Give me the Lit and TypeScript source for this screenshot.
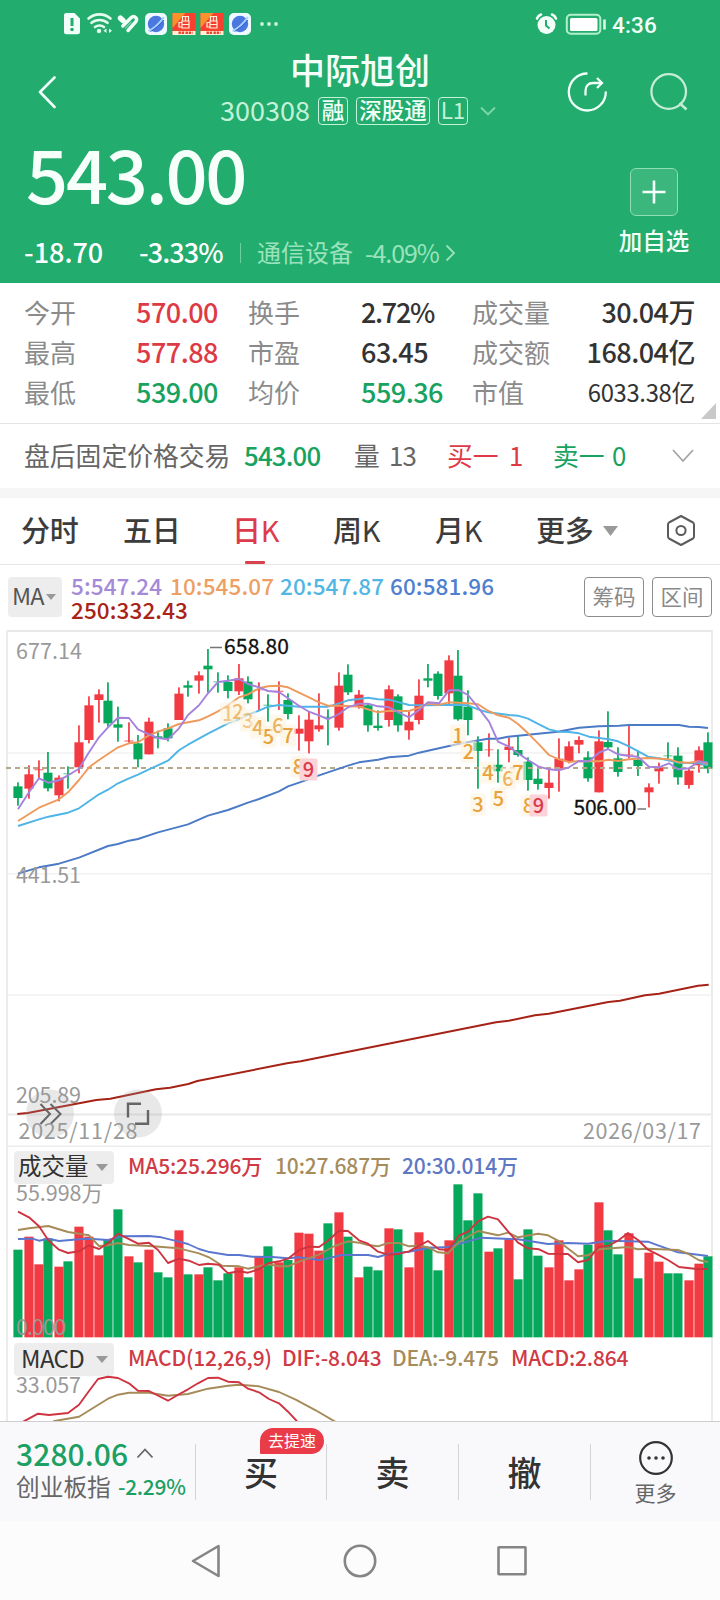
import { LitElement, html, svg, css } from "lit";
import { customElement } from "lit/decorators.js";

const RED = "#f23a43";
const GREEN = "#06a95c";

// [direction, high, body top, body bottom, low], in thirds of a pixel below y = 560
type Candle = [string, number, number, number, number];
const candles: Candle[] = [
  ["G", 667, 679, 714, 737], ["R", 616, 643, 686, 716], ["R", 601, 627, 631, 655], ["G", 576, 638, 685, 694],
  ["R", 646, 653, 706, 724], ["G", 619, 640, 643, 686], ["R", 496, 547, 622, 640], ["R", 409, 436, 540, 550],
  ["R", 388, 403, 420, 488], ["G", 367, 422, 490, 500], ["G", 440, 493, 503, 545], ["R", 487, 541, 545, 548],
  ["G", 525, 550, 598, 622], ["R", 473, 485, 583, 583], ["G", 512, 529, 535, 565], ["G", 490, 505, 535, 544],
  ["R", 382, 401, 480, 480], ["G", 362, 376, 383, 410], ["R", 334, 346, 362, 401], ["G", 267, 317, 328, 398],
  ["G", 337, 364, 367, 398], ["G", 346, 366, 393, 415], ["R", 312, 355, 394, 405], ["G", 349, 365, 418, 430],
  ["R", 367, 388, 391, 452], ["G", 403, 434, 437, 485], ["R", 364, 392, 396, 450], ["G", 400, 420, 462, 478],
  ["R", 466, 506, 521, 572], ["R", 455, 479, 544, 580], ["R", 400, 496, 508, 515], ["G", 448, 470, 473, 556],
  ["R", 337, 377, 503, 512], ["G", 313, 344, 397, 405], ["R", 390, 404, 440, 446], ["G", 430, 436, 496, 515],
  ["G", 451, 497, 504, 512], ["R", 376, 388, 480, 500], ["G", 403, 409, 496, 515], ["R", 455, 485, 511, 539],
  ["R", 358, 407, 480, 493], ["G", 312, 355, 362, 382], ["G", 334, 341, 408, 419], ["R", 286, 301, 400, 437],
  ["G", 270, 347, 478, 482], ["G", 391, 440, 480, 526], ["G", 529, 547, 573, 686], ["R", 520, 568, 571, 590],
  ["G", 568, 614, 634, 668], ["R", 533, 560, 570, 607], ["G", 527, 570, 585, 590], ["G", 592, 605, 660, 692],
  ["G", 626, 656, 672, 689], ["R", 628, 668, 684, 716], ["R", 535, 596, 626, 695], ["R", 544, 559, 604, 610],
  ["R", 529, 540, 554, 580], ["G", 574, 592, 655, 665], ["R", 511, 544, 697, 697], ["G", 454, 546, 562, 566],
  ["G", 562, 595, 636, 650], ["R", 496, 583, 586, 596], ["G", 571, 600, 618, 648], ["R", 670, 682, 697, 742],
  ["R", 608, 622, 634, 671], ["G", 547, 586, 589, 598], ["G", 562, 587, 652, 674], ["R", 626, 632, 675, 686],
  ["R", 559, 571, 616, 638], ["G", 517, 547, 626, 640],
];

// x centre of the k-th trading day; rising days sit one pixel to the right
const dayX = (k: number) => 17.9 + 10 * k + (candles[k][0] === "R" ? 1 : 0);

// bar tops, in thirds of a pixel below y = 1140; the floor is at 592
const volumes = [
  329, 290, 373, 295, 380, 364, 260, 290, 346, 297, 208, 349, 367, 329, 397, 412, 271, 403, 403, 382, 421, 400, 382,
  412, 348, 319, 367, 360, 278, 281, 332, 250, 217, 290, 412, 380, 391, 265, 268, 382, 277, 320, 391, 301, 133, 241,
  160, 335, 325, 298, 418, 268, 347, 382, 301, 421, 388, 314, 187, 271, 343, 280, 415, 338, 365, 400, 400, 421, 371, 349,
];

// A trend line given as two halves: the second one starts at x = 360
const line = (top: number, left: string, right = "") => {
  const half = (src: string, x0: number) =>
    src.split(" ").filter(Boolean).map((p) => {
      const [x, y] = p.split(",").map(Number);
      return `${(x0 + x / 3).toFixed(1)},${(top + y / 3).toFixed(1)}`;
    });
  return [...half(left, 0), ...half(right, 360)].join(" ");
};

const ma5 = line(560,
  "54,748 87,697 117,655 145,668 177,661 204,646 237,626 267,577 297,532 324,502 354,473 387,474 414,508 447,523 474,534 504,538 537,505 564,465 597,436 624,400 654,366 684,362 717,357 744,372 777,382 804,393 837,396 864,415 897,437 927,455 957,466 984,478 1017,462 1044,442 1077,431",
  "24,431 54,439 87,442 117,458 147,472 177,450 204,427 237,430 267,391 297,391 324,405 354,442 387,485 414,545 447,560 474,580 504,600 537,620 567,628 597,631 627,622 657,603 687,604 717,578 744,567 774,583 807,588 834,590 867,620 897,622 927,610 954,628 987,625 1017,604 1044,608");
const ma10 = line(560,
  "54,783 117,743 177,718 204,697 237,660 267,622 297,600 324,582 354,562 387,550 414,547 447,526 474,515 504,505 537,492 597,481 624,469 654,454 684,436 717,412 744,403 777,385 804,379 837,377 864,382 897,398 927,412 957,427 984,437 1017,437 1044,438 1077,440",
  "24,448 54,457 87,452 147,453 177,443 204,431 237,434 267,427 324,430 354,433 384,452 414,466 447,473 474,492 504,520 537,553 567,585 597,598 627,606 657,603 717,604 747,599 774,603 807,598 864,594 927,598 957,607 987,608 1017,604 1044,612");
const ma20 = line(560,
  "54,798 117,778 145,770 204,758 237,745 297,703 324,689 354,670 387,655 414,644 447,628 504,602 537,571 564,554 624,521 684,490 717,478 744,464 777,452 804,440 837,435 897,440 984,440 1017,430 1044,421 1077,417",
  "24,413 54,418 87,419 147,435 204,436 267,434 324,436 354,448 384,457 447,465 474,467 504,476 537,493 567,508 597,515 627,516 657,520 687,530 747,538 774,544 807,559 864,590 897,595 957,608 1017,610 1044,616");
const ma60 = line(560,
  "54,941 117,922 177,911 237,893 324,858 354,852 387,842 414,837 474,817 564,793 624,767 684,750 744,728 777,717 837,694 864,679 897,668 957,646 1044,617 1077,607",
  "54,599 87,592 147,587 177,578 237,565 297,551 384,536 414,536 444,530 504,524 594,515 657,503 717,499 777,497 807,495 957,495 987,500 1017,501 1044,504");
const ma250 = line(960,
  "52,462 83,459 289,420 331,416 468,388 510,383 565,372 592,363 861,310 902,304",
  "408,187 446,182 525,166 566,161 745,126 780,122 855,106 897,101 1014,77 1046,74");
const vol5 = line(1140,
  "54,215 87,232 117,259 145,301 177,329 204,339 237,334 267,316 297,327 324,310 354,281 414,311 447,308 474,330 504,369 537,356 567,362 597,375 624,371 657,374 684,400 717,394 744,398 777,388 804,370 837,364 864,356 897,330 927,320 957,321 984,302 1017,272 1044,273 1077,301",
  "24,311 54,335 84,344 117,341 147,334 177,317 204,303 237,328 264,330 297,287 324,275 354,244 384,230 414,238 444,274 474,308 504,325 537,328 564,341 624,342 654,367 684,360 717,320 744,318 774,302 804,279 834,300 864,329 894,344 924,360 957,381 1017,388 1044,386");
const vol10 = line(1140,
  "54,270 87,265 145,258 204,276 267,286 297,318 324,316 354,309 387,315 447,318 537,325 597,340 627,352 667,377 717,379 744,386 777,379 804,373 837,379 864,379 897,365 957,344 1004,318 1044,304 1077,308",
  "24,315 54,319 84,309 117,309 147,319 177,317 204,322 234,337 264,340 297,306 354,273 414,286 444,278 474,292 534,281 564,286 594,302 654,349 684,346 717,328 804,321 834,328 864,326 954,330 984,341 1017,361 1044,366");
const vol20 = line(1140,
  "54,297 97,296 117,302 145,296 177,303 237,298 267,296 324,300 364,289 447,288 484,292 537,305 564,312 597,327 624,335 684,345 717,345 757,350 817,351 864,355 897,352 957,360 984,355 1024,345 1077,345",
  "24,345 54,351 84,342 147,335 204,324 264,321 324,304 364,293 474,298 564,312 624,309 684,311 744,302 864,305 894,316 954,337 1044,348");
const dif = line(1140,
  "70,845 114,821 147,825 204,819 237,794 267,753 294,717 324,710 354,714 387,730 414,752 447,753 504,782 537,763 564,748 594,730 624,714 654,713 684,725 717,727 744,746 777,757 807,777 837,790 864,815 893,846");
const dea = line(1140,
  "160,844 237,830 324,776 354,764 387,758 447,758 504,767 564,762 624,746 684,737 717,734 777,739 837,756 887,779 947,811 1007,846");

// [digit, x, y, opacity]
const marks: [string, number, number, number][] = [
  ["1", 228, 714, 0.55], ["2", 238, 712, 0.7], ["3", 248, 721, 0.6], ["4", 258, 728, 0.85], ["5", 268.5, 737, 1],
  ["6", 278, 726, 0.8], ["7", 288, 736, 1], ["8", 298.5, 767, 1], ["9", 308.5, 770, 1],
  ["1", 458, 736, 1], ["2", 468.5, 752, 1], ["3", 478, 805, 1], ["4", 488, 773, 1], ["5", 498.5, 799, 1],
  ["6", 508, 779, 0.8], ["7", 518, 773, 1], ["8", 528.5, 806, 1], ["9", 538.5, 806, 1],
];

const planet = () => svg`
  <rect x="0" y="0" width="22" height="22" rx="5" fill="#eefaff"/>
  <circle cx="11" cy="11" r="8.200" fill="#4a78e0"/>
  <path d="M3.500 18C9 15.500 15 9.500 19 4" stroke="#a5d2ff" stroke-width="2" fill="none"/>
  <path d="M5.500 18.500C10 16 15.500 11.500 19 7" stroke="#3560c8" stroke-width="1" fill="none"/>`;

const redApp = () => svg`
  <rect width="23" height="22" fill="#f8402f"/>
  <path d="M0 0H13L0 15Z" fill="#f9912c"/>
  <path d="M10 3.500h6v4.500h-6zM6.500 9.500h3v4.500h-3zM9.500 8h7v7h-7zM13 3.500v4.500M9.500 11.500h7" fill="none" stroke="#ffeede" stroke-width="1.200"/>
  <path d="M0 18H23V22H0Z" fill="#fff0d8"/>
  <path d="M6 19.800H12M13 19.800H20" stroke="#e8452c" stroke-width="2.400" stroke-dasharray="2.400 0.800"/>`;

@customElement("status-bar")
class StatusBar extends LitElement {
  static styles = css`
    :host { display: flex; height: 48px; align-items: center; justify-content: space-between; padding: 0 63px 0 63px; box-sizing: border-box; }
    .side { display: flex; align-items: center; }
    .time { font: 500 22.5px/30px Roboto, sans-serif; color: #f2fff8; margin-left: 5px; letter-spacing: 0.2px; padding-top: 2px; }
    svg { display: block; }
  `;
  render() {
    return html`
      <div class="side">
        <svg width="216" height="26" viewBox="63 11 216 26">
          <path d="M67 13H74.500L80 18.500V32a2.300 2.300 0 0 1-2.300 2.300H66.300A2.300 2.300 0 0 1 64 32V15.300A2.300 2.300 0 0 1 66.300 13Z" fill="#f2fff8"/>
          <path d="M72 18V26" stroke="#22ac6e" stroke-width="3"/><circle cx="72" cy="29.500" r="1.800" fill="#22ac6e"/>
          <g fill="none" stroke="#e4fbee" stroke-width="2.600" stroke-linecap="round">
            <path d="M88.500 18.500C95 13 104 13 110.500 18.500"/><path d="M91.500 22.800C96 19 103 19 107.500 22.800"/><path d="M95 27C97.500 25 101.500 25 104 27"/>
          </g>
          <circle cx="99" cy="31" r="2.200" fill="#e4fbee"/>
          <path d="M106.500 28.500V33L103.500 30.700ZM109 28.500V33L112 30.700Z" fill="#e4fbee"/>
          <g fill="none" stroke="#f2fff8" stroke-linecap="round">
            <path d="M120.500 18.200L123 20.500" stroke-width="5.500"/>
            <path d="M122.800 26L131 17.800C134 15 138 18 136 21.500L128 30.500" stroke-width="3.400"/>
            <path d="M125.500 28L131 22.300" stroke-width="1.500" opacity="0.4"/>
          </g>
          <g transform="translate(145 13)">${planet()}</g>
          <g transform="translate(172.500 13)">${redApp()}</g>
          <g transform="translate(200.500 13)">${redApp()}</g>
          <g transform="translate(229 13)">${planet()}</g>
          <g fill="#c9f3dc"><circle cx="262" cy="24" r="1.900"/><circle cx="269" cy="24" r="1.900"/><circle cx="276" cy="24" r="1.900"/></g>
        </svg>
      </div>
      <div class="side">
        <svg width="72" height="26" viewBox="535 11 72 26">
          <circle cx="546.500" cy="25" r="9" fill="#f2fff8"/>
          <path d="M546 20V25.500L549.500 28.500" fill="none" stroke="#22ac6e" stroke-width="2"/>
          <path d="M537 18.500C537.800 16.500 539 15.300 541 14.500M556 18.500C555.200 16.500 554 15.300 552 14.500" fill="none" stroke="#f2fff8" stroke-width="2.600" stroke-linecap="round"/>
          <rect x="566.800" y="14.800" width="33.500" height="19" rx="4" fill="none" stroke="#b4efcd" stroke-width="2"/>
          <rect x="570" y="18" width="27.500" height="13" rx="1.500" fill="#fff"/>
          <path d="M604.500 19.500V29.500" stroke="#d7f8e5" stroke-width="2.600"/>
        </svg>
        <span class="time">4:36</span>
      </div>`;
  }
}

@customElement("stock-header")
class StockHeader extends LitElement {
  static styles = css`
    :host { display: block; height: 283px; background: #22ac6e; color: #fff; }
    .nav { display: grid; grid-template-columns: 160px 1fr 160px; height: 86px; }
    .back { padding: 28px 0 0 37px; }
    .mid { display: flex; flex-direction: column; align-items: center; }
    .name { font-size: 35px; line-height: 42px; font-weight: 500; margin-top: 0; color: #f4fff9; }
    .sub { display: flex; align-items: center; height: 28px; margin-top: 7px; width: 280px; }
    .code { font-size: 27px; line-height: 28px; color: #c4f2d9; width: 98px; padding-bottom: 2px; }
    .tag { box-sizing: border-box; height: 28px; border: 1.300px solid #c4f2d9; border-radius: 4px; font-size: 22.500px; line-height: 23px; color: #effff6; text-align: center; width: 30px; margin-right: 8px; font-weight: 500; }
    .wide { width: 74px; }
    .l1 { color: #c4f2d9; margin-right: 12px; font-weight: 400; }
    .tools { padding-top: 24px; }
    svg { display: block; }
    .body { display: flex; justify-content: space-between; }
    .price { font-size: 74px; line-height: 80px; font-weight: 500; letter-spacing: -2.3px; padding: 0 0 0 26px; margin-top: -2px; color: #f6fffa; }
    .change { display: flex; align-items: center; height: 30px; margin-top: 27px; padding-left: 24px; font-size: 27px; line-height: 30px; }
    .diff { width: 115px; font-weight: 500; padding-bottom: 5px; }
    .pct { width: 101px; font-weight: 500; letter-spacing: -0.9px; padding-bottom: 5px; }
    .bar { width: 1px; height: 20px; background: #6bd09d; margin: 0 16px 3px 0; }
    .sector { color: #9be3bd; font-size: 24px; width: 108px; padding-bottom: 5px; }
    .spct { color: #9be3bd; font-size: 25px; width: 80px; letter-spacing: -1.1px; padding-bottom: 5px; }
    .change svg { margin-bottom: 3px; }
    .add { width: 132px; display: flex; flex-direction: column; align-items: center; padding-top: 34px; }
    .plus { box-sizing: border-box; width: 48px; height: 48px; border: 1.300px solid #8fdcb5; border-radius: 6px; background: #3bb67d; display: grid; place-items: center; }
    .addText { font-size: 23.500px; line-height: 28px; font-weight: 500; margin-top: 10px; color: #f0fff7; }
  `;
  render() {
    return html`
      <status-bar></status-bar>
      <div class="nav">
        <div class="back">
          <svg width="20" height="34" viewBox="0 0 20 34"><path d="M17.500 1.500L3 16L17.500 31" fill="none" stroke="#f0fff7" stroke-width="2.600" stroke-linecap="round" stroke-linejoin="round"/></svg>
        </div>
        <div class="mid">
          <div class="name">中际旭创</div>
          <div class="sub">
            <span class="code">300308</span><span class="tag">融</span><span class="tag wide">深股通</span><span class="tag l1">L1</span>
            <svg width="16" height="10" viewBox="0 0 16 10"><path d="M1 1.500L8 8.500L15 1.500" fill="none" stroke="#7fd8a9" stroke-width="1.800"/></svg>
          </div>
        </div>
        <div class="tools">
          <svg width="150" height="42" viewBox="560 72 150 42" fill="none">
            <path d="M587.500 73.500A18.500 18.500 0 1 0 605.800 91.500" stroke="#f0fff7" stroke-width="2.300"/>
            <path d="M585.500 95.500V91C585.500 86 588.500 83 593 83H601.500" stroke="#f0fff7" stroke-width="2.300"/>
            <path d="M597 78L602 83L597 88" stroke="#f0fff7" stroke-width="2.300"/>
            <circle cx="668.700" cy="91.500" r="17.300" stroke="#c6ecd6" stroke-width="2.300"/>
            <path d="M679.500 103L686.500 109.500" stroke="#c6ecd6" stroke-width="2.600"/>
          </svg>
        </div>
      </div>
      <div class="body">
        <div>
          <div class="price">543.00</div>
          <div class="change">
            <span class="diff">-18.70</span><span class="pct">-3.33%</span><span class="bar"></span>
            <span class="sector">通信设备</span><span class="spct">-4.09%</span>
            <svg width="11" height="18" viewBox="0 0 11 18"><path d="M1.500 1.500L9 9L1.500 16.500" fill="none" stroke="#9be3bd" stroke-width="1.800"/></svg>
          </div>
        </div>
        <div class="add">
          <div class="plus"><svg width="24" height="24" viewBox="0 0 24 24"><path d="M12 0.500V23.500M0.500 12H23.500" stroke="#f6fffa" stroke-width="2.600"/></svg></div>
          <div class="addText">加自选</div>
        </div>
      </div>`;
  }
}

@customElement("quote-panel")
class QuotePanel extends LitElement {
  static styles = css`
    :host { display: block; background: #fff; }
    .grid { box-sizing: border-box; display: grid; grid-template-columns: 112px 112px 113px 111px 78px 145px; grid-auto-rows: 40px; padding: 9px 0 10px 24px; height: 141px; border-bottom: 1.500px solid #e4e4e4; position: relative; }
    .k { font-size: 26px; line-height: 40px; color: #8b8b8b; }
    .v { font-size: 27px; line-height: 40px; font-weight: 500; color: #333; letter-spacing: -0.5px; }
    .pc { letter-spacing: -1.300px; }
    .right { text-align: right; }
    .small { font-size: 23.800px; letter-spacing: -0.3px; font-weight: 400; }
    .up { color: #de3a45; }
    .down { color: #17a260; }
    .corner { position: absolute; right: 4px; bottom: 4px; }
    .after { display: grid; grid-template-columns: 220px 110px 35px 58px 62px 44px 59px 60px 22px; align-items: center; padding: 0 0 0 24px; height: 64px; font-size: 25.800px; line-height: 36px; color: #666; }
    .after span { padding-bottom: 3px; }
    .after .p { letter-spacing: -0.8px; font-weight: 500; }
    .after .n { letter-spacing: -0.8px; }
    .gap { height: 10px; background: #f6f6f6; }
    svg { display: block; }
  `;
  rows = [
    ["今开", "570.00", "up", "换手", "2.72%", "pc", "成交量", "30.04万", ""],
    ["最高", "577.88", "up", "市盈", "63.45", "", "成交额", "168.04亿", ""],
    ["最低", "539.00", "down", "均价", "559.36", "down", "市值", "6033.38亿", "small"],
  ];
  render() {
    return html`
      <div class="grid">
        ${this.rows.map((r) => html`
          <span class="k">${r[0]}</span><span class="v ${r[2]}">${r[1]}</span>
          <span class="k">${r[3]}</span><span class="v ${r[5]}">${r[4]}</span>
          <span class="k">${r[6]}</span><span class="v right ${r[8]}">${r[7]}</span>`)}
        <svg class="corner" width="15" height="16" viewBox="0 0 15 16"><path d="M15 0V16H0Z" fill="#c9c9c9"/></svg>
      </div>
      <div class="after">
        <span>盘后固定价格交易</span><span class="down p">543.00</span><span>量</span><span class="n">13</span>
        <span class="up">买一</span><span class="up">1</span><span class="down">卖一</span><span class="down">0</span>
        <svg width="22" height="14" viewBox="0 0 22 14"><path d="M1 1L11 12L21 1" fill="none" stroke="#a5a5a5" stroke-width="1.800"/></svg>
      </div>
      <div class="gap"></div>`;
  }
}

@customElement("period-tabs")
class PeriodTabs extends LitElement {
  static styles = css`
    :host { display: block; background: #fff; border-bottom: 1px solid #e6e6e6; }
    .tabs { display: grid; grid-template-columns: 102px 109px 101px 102px 101px 67px 62px 32px; padding-left: 21px; height: 66px; align-items: center; font-size: 29px; line-height: 66px; color: #3c3c3c; font-weight: 500; }
    .tab { height: 66px; margin-top: -4px; letter-spacing: -0.2px; }
    .thin { font-weight: 400; }
    .on { color: #dd3b4b; position: relative; }
    .on::after { content: ""; position: absolute; left: 13px; bottom: -2px; width: 20px; height: 3px; border-radius: 1px; background: #d8434f; }
    svg { display: block; }
  `;
  render() {
    const k = html`<span class="thin">K</span>`;
    return html`<div class="tabs">
      <span class="tab">分时</span><span class="tab">五日</span><span class="tab on">日${k}</span><span class="tab">周${k}</span>
      <span class="tab">月${k}</span><span class="tab">更多</span>
      <svg width="15" height="10" viewBox="0 0 15 10"><path d="M0 0H15L7.500 10Z" fill="#999"/></svg>
      <svg width="32" height="34" viewBox="0 0 32 34" fill="none" stroke="#5c5c5c" stroke-width="2">
        <path d="M16 2L28 8.500Q29 9.200 29 10.500V22.500Q29 23.800 28 24.500L16 31L4 24.500Q3 23.800 3 22.500V10.500Q3 9.200 4 8.500Z" stroke-linejoin="round"/><circle cx="16" cy="16.500" r="4.600"/>
      </svg>
    </div>`;
  }
}

@customElement("price-charts")
class PriceCharts extends LitElement {
  static styles = css`
    :host { display: block; background: #fff; height: 856px; overflow: hidden; }
    svg { display: block; overflow: visible; }
    .maRow { display: flex; height: 65px; padding: 12px 8px 0 8px; box-sizing: border-box; align-items: flex-start; }
    .maPill { display: flex; align-items: center; gap: 2px; box-sizing: border-box; width: 54px; height: 40px; padding-left: 4px; background: #ededed; border-radius: 4px; font-size: 23.500px; line-height: 36px; color: #555; letter-spacing: -0.8px; }
    .maPill span { padding-bottom: 4px; }
    .legend { display: grid; grid-template-columns: 99px 110px 110px 120px; grid-auto-rows: 24px; margin: -4px 0 0 9px; width: 505px; font-size: 22.500px; line-height: 24px; font-weight: 500; letter-spacing: 0.1px; }
    .c5 { color: #a48ad8; } .c10 { color: #ee9f63; } .c20 { color: #52b6e4; } .c60 { color: #4f7fd0; } .c250 { color: #a92418; }
    .btn { box-sizing: border-box; width: 60px; height: 40px; border: 1.300px solid #8d8d8d; border-radius: 4px; text-align: center; font-size: 21.500px; line-height: 35px; color: #8a8a8a; margin-left: auto; }
    .frame { margin-left: 6px; width: 703px; border: solid #ececec; border-width: 0 2px; }
    .head { display: grid; grid-template-columns: 100px auto; height: 37px; padding: 4px 0 0 6px; box-sizing: border-box; align-items: start; }
    .macdHead { padding-top: 4px; }
    .pill { display: grid; grid-template-columns: 1fr 12px; align-items: center; box-sizing: border-box; width: 100px; height: 33px; padding: 0 6px 0 4px; background: #ededed; border-radius: 4px; font-size: 23.500px; line-height: 29px; color: #333; }
    .pill span { padding-bottom: 4px; }
    .macd { padding-left: 7px; letter-spacing: -0.6px; font-size: 24px; }
    .vals { display: flex; padding-left: 14px; font-size: 21px; line-height: 28px; font-weight: 500; height: 30px; letter-spacing: -0.15px; }
    .w1 { width: 147px; } .w2 { width: 127px; } .w3 { width: 120px; }
    .m1 { width: 154px; } .m2 { width: 110px; } .m3 { width: 119px; } .m4 { width: 130px; }
    .red { color: #cf3a45; } .gold { color: #a68c5b; } .blue { color: #5f78c4; }
    .lab { font: 21.500px "Noto Sans CJK SC", sans-serif; fill: #999; }
    .ink { fill: #111; font-size: 21px; stroke: #111; stroke-width: 0.300px; }
    .mark { font: 500 20px "Noto Sans CJK SC", sans-serif; text-anchor: middle; fill: #e8a23c; }
    .nine { fill: #d93a4a; }
  `;
  render() {
    const bar = (k: number) => (candles[k][0] === "R" ? RED : GREEN);
    const seam = (k: number) => {
      if (k + 1 >= candles.length || candles[k][0] !== candles[k + 1][0]) return null;
      const top = Math.max(volumes[k], volumes[k + 1]);
      return svg`<rect x=${dayX(k) + 4.600} y=${1140 + top / 3} width="0.900" height=${(592 - top) / 3} fill=${bar(k)} opacity="0.400" />`;
    };
    const tri = html`<svg width="12" height="7" viewBox="0 0 12 7"><path d="M0 0H12L6 7Z" fill="#999"/></svg>`;
    return html`
      <div class="maRow">
        <div class="maPill"><span>MA</span><svg width="10" height="6" viewBox="0 0 10 6"><path d="M0 0H10L5 6Z" fill="#999"/></svg></div>
        <div class="legend">
          <span class="c5">5:547.24</span><span class="c10">10:545.07</span><span class="c20">20:547.87</span><span class="c60">60:581.96</span>
          <span class="c250">250:332.43</span>
        </div>
        <div class="btn">筹码</div><div class="btn">区间</div>
      </div>
      <div class="frame">
        <svg width="703" height="517" viewBox="8 630 703 517">
          <path d="M8 631H711" stroke="#e8e8e8" stroke-width="2"/>
          <path d="M8 753H711M8 873.700H711M8 995H711" stroke="#f1f1f1" stroke-width="1.500"/>
          <path d="M8 1114.500H711" stroke="#e9e9e9" stroke-width="2"/>
          <path d="M8 1146.300H711" stroke="#ececec" stroke-width="1.500"/>
          ${candles.map((c, k) => svg`
            <rect x=${dayX(k) - 0.8} y=${560 + c[1] / 3} width="1.700" height=${(c[4] - c[1]) / 3} fill=${bar(k)} />
            <rect x=${dayX(k) - 4.500} y=${560 + c[2] / 3} width="9.100" height=${(c[3] - c[2]) / 3} fill=${bar(k)} opacity=${c[3] - c[2] < 5 ? 0.65 : 1} />`)}
          <path d="M6 768H711" stroke="#b3a98a" stroke-width="1.800" stroke-dasharray="5 4"/>
          <g fill="none" stroke-width="1.900" stroke-linejoin="round">
            <polyline points=${ma60} stroke="#4b7ac6"/><polyline points=${ma20} stroke="#4fb4e6"/>
            <polyline points=${ma10} stroke="#ef9a5c"/><polyline points=${ma5} stroke="#a582dc"/>
            <polyline points=${ma250} stroke="#a62217"/>
          </g>
          ${marks.map((m) => svg`
            <rect x=${m[1] - (m[0] === "9" ? 9 : 8)} y=${m[2] - 11.500} width=${m[0] === "9" ? 18 : 16} height="22" rx="2" fill=${m[0] === "9" ? "#fbd3d8" : "#fdf3df"} opacity=${m[0] === "9" ? 1 : 0.6}/>
            <text class="mark ${m[0] === "9" ? "nine" : ""}" x=${m[1]} y=${m[2] + 7.300} opacity=${m[3]}>${m[0]}</text>`)}
          <path d="M210 647.500H222M637.500 809H646" stroke="#777" stroke-width="1.500"/>
          <text class="lab ink" x="224" y="653.800" textLength="65">658.80</text>
          <text class="lab ink" x="573.500" y="815" textLength="63">506.00</text>
          <text class="lab" x="16" y="659" textLength="66">677.14</text>
          <text class="lab" x="16" y="882.500" textLength="65">441.51</text>
          <text class="lab" x="16" y="1102.500" textLength="65">205.89</text>
          <g fill="#999" opacity="0.22"><circle cx="50" cy="1113.500" r="24"/><circle cx="138" cy="1113.500" r="24"/></g>
          <g fill="none" stroke="#666" stroke-width="2">
            <path d="M40.500 1104L50 1114L40.500 1124M50.500 1104L60.500 1114L50.500 1124"/>
            <path d="M128 1117.500V1103.800H141M135 1123.800H148V1110" stroke-width="2.400"/>
          </g>
          <text class="lab" x="18.500" y="1138.700" textLength="119">2025/11/28</text>
          <text class="lab" x="583" y="1138.700" textLength="118">2026/03/17</text>
        </svg>
        <div class="head">
          <div class="pill"><span>成交量</span>${tri}</div>
          <div class="vals"><span class="w1 red">MA5:25.296万</span><span class="w2 gold">10:27.687万</span><span class="w3 blue">20:30.014万</span></div>
        </div>
        <svg width="703" height="155" viewBox="8 1184 703 155">
          ${volumes.map((v, k) => svg`<rect x=${dayX(k) - 4.500} y=${1140 + v / 3} width="9.100" height=${(592 - v) / 3} fill=${bar(k)} />${seam(k)}`)}
          <g fill="none" stroke-width="1.900" stroke-linejoin="round">
            <polyline points=${vol20} stroke="#5b76cf"/><polyline points=${vol10} stroke="#a68b58"/><polyline points=${vol5} stroke="#cf3340"/>
          </g>
          <text class="lab" x="16" y="1200.700" textLength="87">55.998万</text>
          <text class="lab" x="16" y="1334.500" textLength="50">0.000</text>
        </svg>
        <div class="head macdHead">
          <div class="pill macd"><span>MACD</span>${tri}</div>
          <div class="vals"><span class="m1 red">MACD(12,26,9)</span><span class="m2 red">DIF:-8.043</span><span class="m3 gold">DEA:-9.475</span><span class="m4 red">MACD:2.864</span></div>
        </div>
        <svg width="703" height="45" viewBox="8 1376 703 45">
          <g fill="none" stroke-width="1.900" stroke-linejoin="round"><polyline points=${dea} stroke="#a68b58"/><polyline points=${dif} stroke="#cf3340"/></g>
          <text class="lab" x="16" y="1392.700" textLength="65">33.057</text>
        </svg>
      </div>`;
  }
}

@customElement("trade-bar")
class TradeBar extends LitElement {
  static styles = css`
    :host { display: block; }
    svg { display: block; }
    .bar { display: grid; grid-template-columns: 195px 131px 132px 132px 1fr; height: 100px; box-sizing: border-box; background: #f9f9fc; border-top: 1.500px solid #cfcfd2; }
    .cell { display: grid; place-items: center; border-left: 1px solid #d5d5d8; height: 56px; margin-top: 22px; position: relative; font-size: 34px; line-height: 50px; font-weight: 500; color: #333; }
    .act { padding-bottom: 1px; }
    .badge { position: absolute; left: 64px; top: -16px; width: 64px; height: 26px; border-radius: 13px 13px 13px 1px; background: #e93c48; color: #fff; font-size: 16px; line-height: 24px; text-align: center; font-weight: 400; }
    .index { padding: 13px 0 0 16px; }
    .line { display: flex; align-items: center; }
    .num { font-size: 30px; line-height: 36px; font-weight: 500; color: #1ca063; width: 120px; letter-spacing: 0.1px; }
    .label { font-size: 23.700px; line-height: 30px; color: #666; width: 102px; }
    .pct { font-size: 21px; line-height: 30px; font-weight: 500; color: #1ca063; letter-spacing: -0.3px; }
    .more { display: flex; flex-direction: column; align-items: center; font-size: 21px; line-height: 28px; font-weight: 400; color: #666; }
    .more svg { flex: none; margin: -4px 0 2px; }
    .sys { display: grid; height: 79px; background: #fcfcfc; }
  `;
  render() {
    return html`
      <div class="bar">
        <div class="index">
          <div class="line"><span class="num">3280.06</span><svg width="18" height="11" viewBox="0 0 18 11"><path d="M1.500 9.500L9 1.500L16.500 9.500" fill="none" stroke="#666" stroke-width="1.800"/></svg></div>
          <div class="line"><span class="label">创业板指</span><span class="pct">-2.29%</span></div>
        </div>
        <div class="cell"><span class="act">买</span><span class="badge">去提速</span></div>
        <div class="cell"><span class="act">卖</span></div>
        <div class="cell"><span class="act">撤</span></div>
        <div class="cell more">
          <svg width="36" height="36" viewBox="0 0 36 36"><circle cx="18" cy="18" r="15.800" fill="none" stroke="#333" stroke-width="2.200"/><g fill="#333"><circle cx="11" cy="18" r="1.800"/><circle cx="18" cy="18" r="1.800"/><circle cx="25" cy="18" r="1.800"/></g></svg>
          <span>更多</span>
        </div>
      </div>
      <div class="sys">
        <svg width="720" height="79" viewBox="0 1521 720 79" fill="none" stroke="#858585" stroke-width="2.600" stroke-linejoin="round">
          <path d="M218.500 1546V1576L193 1561Z"/><circle cx="360" cy="1561" r="15.200"/><rect x="498.500" y="1547.300" width="27" height="27" rx="0.500"/>
        </svg>
      </div>`;
  }
}

@customElement("app-root")
class AppRoot extends LitElement {
  static styles = css`
    :host { display: block; width: 720px; height: 1600px; overflow: hidden; background: #fff; font-family: "Noto Sans CJK SC", "Noto Sans", sans-serif; white-space: nowrap; }
  `;
  render() {
    return html`<stock-header></stock-header><quote-panel></quote-panel><period-tabs></period-tabs><price-charts></price-charts><trade-bar></trade-bar>`;
  }
}
